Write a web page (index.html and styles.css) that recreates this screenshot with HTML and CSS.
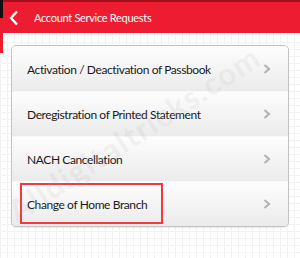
FILE: index.html
```html
<!DOCTYPE html>
<html>
<head>
<meta charset="utf-8">
<link rel="stylesheet" href="styles.css">
</head>
<body>
<div class="page">
  <div class="edge">
    <div class="edge-black"></div>
    <div class="edge-red"></div>
  </div>
  <div class="main">
    <div class="topline"></div>
    <header class="bar">
      <svg class="back" width="12" height="16" viewBox="0 0 12 16"><path d="M9 1.5 L3 8 L9 14.5" fill="none" stroke="#fff" stroke-width="2.4"/></svg>
      <span class="title">Account Service Requests</span>
    </header>
    <div class="content">
      <div class="card">
        <div class="row"><span>Activation / Deactivation of Passbook</span><svg class="chev" width="8" height="10" viewBox="0 0 8 10"><path d="M1.5 1 L6 5 L1.5 9" fill="none" stroke="#b4b4b4" stroke-width="2.2"/></svg></div>
        <div class="row"><span>Deregistration of Printed Statement</span><svg class="chev" width="8" height="10" viewBox="0 0 8 10"><path d="M1.5 1 L6 5 L1.5 9" fill="none" stroke="#b4b4b4" stroke-width="2.2"/></svg></div>
        <div class="row"><span>NACH Cancellation</span><svg class="chev" width="8" height="10" viewBox="0 0 8 10"><path d="M1.5 1 L6 5 L1.5 9" fill="none" stroke="#b4b4b4" stroke-width="2.2"/></svg></div>
        <div class="row"><span>Change of Home Branch</span><svg class="chev" width="8" height="10" viewBox="0 0 8 10"><path d="M1.5 1 L6 5 L1.5 9" fill="none" stroke="#b4b4b4" stroke-width="2.2"/></svg><div class="highlight"></div></div>
      </div>
      <div class="watermark">Alldigitaltricks.com</div>
    </div>
  </div>
</div>
</body>
</html>
```
FILE: styles.css
```css
* { box-sizing: border-box; }
html, body { margin: 0; padding: 0; }
body {
  width: 300px;
  height: 258px;
  overflow: hidden;
  font-family: Lato, "Open Sans", sans-serif;
  background-color: #fff;
  background-image:
    linear-gradient(to right, #f2f2f2 1px, transparent 1px),
    linear-gradient(to bottom, #f2f2f2 1px, transparent 1px);
  background-size: 7px 7px;
}
.page { display: flex; height: 258px; }
.edge { width: 3px; display: flex; flex-direction: column; flex: none; }
.edge-black { height: 18px; background: #111; }
.edge-red { height: 35px; background: #ee1c30; }
.main { flex: 1; display: flex; flex-direction: column; }
.topline { height: 2px; background: #a3111f; }
.bar {
  height: 31px;
  background: #ee1c30;
  display: flex;
  align-items: center;
  padding-left: 5px;
}
.back { margin-right: 14px; }
.title { color: #fff; font-size: 11px; letter-spacing: -0.3px; }
.content { position: relative; padding: 12px 11px 0 8px; }
.card {
  border: 1px solid #c4c4c4;
  border-radius: 5px;
  background: #f4f4f4;
  box-shadow: 0 1px 1px rgba(0,0,0,0.08);
}
.row {
  position: relative;
  height: 45px;
  display: flex;
  align-items: center;
  justify-content: space-between;
  padding: 0 17px 0 15px;
  background: linear-gradient(to bottom, #fdfdfd, #ebebeb);
  border-top: 1px solid #f8f8f8;
  font-size: 12px;
  color: #1a1a1a;
  letter-spacing: -0.4px;
}
.row:first-child { border-radius: 4px 4px 0 0; }
.row:last-child { border-radius: 0 0 4px 4px; }
.highlight {
  position: absolute;
  left: 8px;
  top: 1px;
  width: 143px;
  height: 41px;
  border: 2px solid #f2383d;
}
.watermark {
  position: absolute;
  left: 18px;
  top: 158px;
  height: 38px;
  line-height: 38px;
  font-size: 31px;
  font-weight: 700;
  color: rgba(170,170,170,0.15);
  transform: rotate(-33deg);
  transform-origin: left bottom;
  white-space: nowrap;
  pointer-events: none;
  letter-spacing: 1.5px;
}
```
